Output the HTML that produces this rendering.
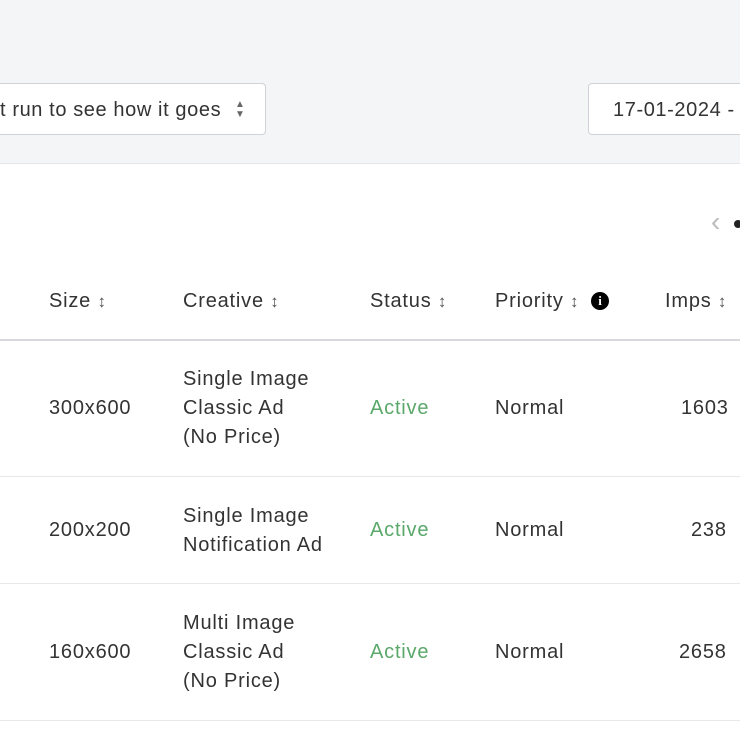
<!DOCTYPE html>
<html><head><style>
body{margin:0;width:740px;height:740px;overflow:hidden;background:#fff;font-family:"Liberation Sans",sans-serif;color:#333;position:relative}
.top{position:absolute;left:0;top:0;width:740px;height:163px;background:#f4f5f7;border-bottom:1px solid #e4e5e8}
.box{position:absolute;background:#fff;border:1px solid #cfd2d6;border-radius:4px;font-size:20px;letter-spacing:0.6px;color:#333;line-height:50px;box-sizing:border-box;height:52px}
.t{position:absolute;font-size:20px;letter-spacing:0.8px;line-height:29px;white-space:nowrap}
.line{position:absolute;left:0;width:740px;height:1px;background:#e8e8ea}
.g{color:#5aa86a}
.arr{font-size:17px;color:#555;letter-spacing:0}
</style></head><body>
<div class="top"></div>
<div class="box" style="left:-10px;top:83px;width:276px"><span style="position:absolute;left:9px;top:1px">t run to see how it goes</span><span style="position:absolute;left:244px;font-size:10px;line-height:10px;top:16px;color:#666">▲<br>▼</span></div>
<div class="box" style="left:588px;top:83px;width:170px;padding-left:24px;padding-top:1px">17-01-2024 -</div>
<div class="t" style="left:711px;top:207px;color:#bbb;font-size:28px">‹</div>
<div style="position:absolute;left:734px;top:220px;width:8px;height:8px;border-radius:50%;background:#222"></div>
<div class="t" style="left:49px;top:287px">Size <span class="arr">↕</span></div>
<div class="t" style="left:183px;top:287px">Creative <span class="arr">↕</span></div>
<div class="t" style="left:370px;top:287px">Status <span class="arr">↕</span></div>
<div class="t" style="left:495px;top:287px">Priority <span class="arr">↕</span></div>
<div style="position:absolute;left:591px;top:292px;width:18px;height:18px;border-radius:50%;background:#000;color:#fff;font-size:13px;font-weight:bold;text-align:center;line-height:18px;font-family:'Liberation Serif',serif">i</div>
<div class="t" style="left:665px;top:287px">Imps <span class="arr">↕</span></div>
<div class="line" style="top:339px;height:2px;background:#d8d9dc"></div>
<div class="t" style="left:49px;top:394px">300x600</div>
<div class="t" style="left:183px;top:365px">Single Image<br>Classic Ad<br>(No Price)</div>
<div class="t g" style="left:370px;top:394px">Active</div>
<div class="t" style="left:495px;top:394px">Normal</div>
<div class="t" style="left:681px;top:394px">1603</div>
<div class="line" style="top:476px"></div>
<div class="t" style="left:49px;top:516px">200x200</div>
<div class="t" style="left:183px;top:502px">Single Image<br>Notification Ad</div>
<div class="t" style="left:691px;top:516px">238</div>
<div class="t g" style="left:370px;top:516px">Active</div>
<div class="t" style="left:495px;top:516px">Normal</div>
<div class="line" style="top:583px"></div>
<div class="t" style="left:49px;top:638px">160x600</div>
<div class="t" style="left:183px;top:609px">Multi Image<br>Classic Ad<br>(No Price)</div>
<div class="t g" style="left:370px;top:638px">Active</div>
<div class="t" style="left:495px;top:638px">Normal</div>
<div class="t" style="left:679px;top:638px">2658</div>
<div class="line" style="top:720px"></div>
</body></html>
